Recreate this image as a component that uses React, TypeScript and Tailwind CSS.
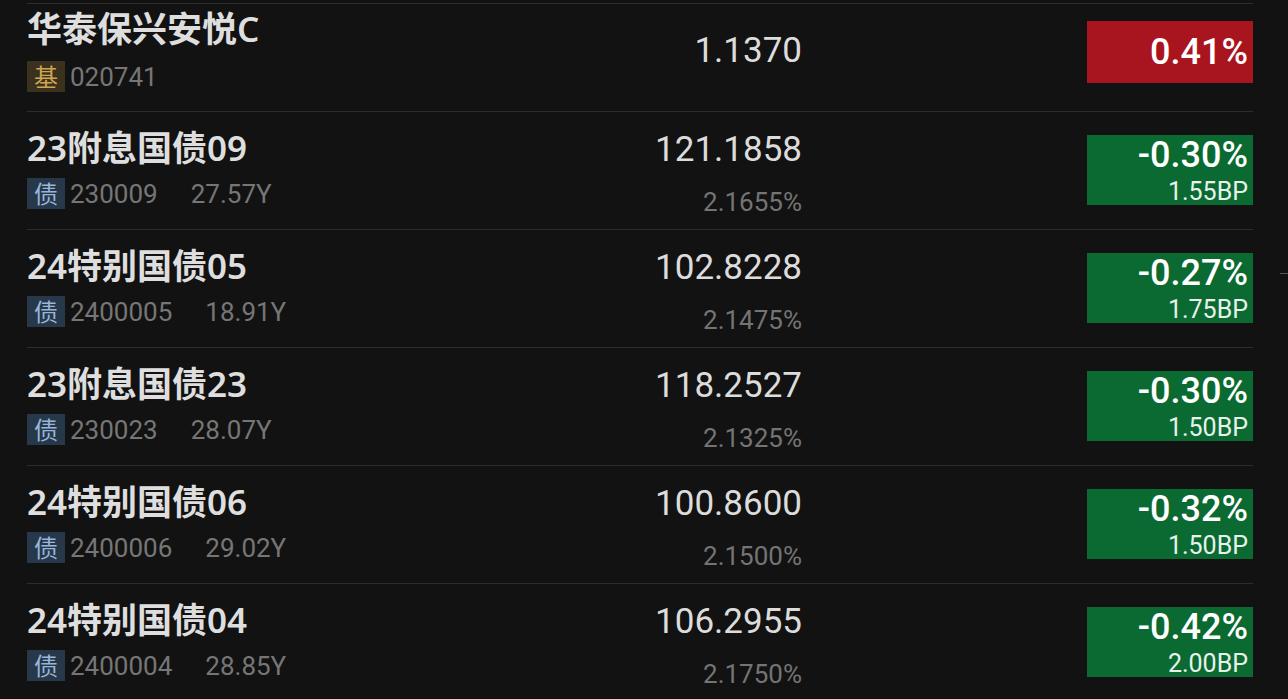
import React from "react";

type Row = {
  name: string;
  tag: "基" | "债";
  code: string;
  term?: string;
  price: string;
  yieldRate?: string;
  change: string;
  bp?: string;
};

const rows: Row[] = [
  { name: "华泰保兴安悦C", tag: "基", code: "020741", price: "1.1370", change: "0.41%" },
  { name: "23附息国债09", tag: "债", code: "230009", term: "27.57Y", price: "121.1858", yieldRate: "2.1655%", change: "-0.30%", bp: "1.55BP" },
  { name: "24特别国债05", tag: "债", code: "2400005", term: "18.91Y", price: "102.8228", yieldRate: "2.1475%", change: "-0.27%", bp: "1.75BP" },
  { name: "23附息国债23", tag: "债", code: "230023", term: "28.07Y", price: "118.2527", yieldRate: "2.1325%", change: "-0.30%", bp: "1.50BP" },
  { name: "24特别国债06", tag: "债", code: "2400006", term: "29.02Y", price: "100.8600", yieldRate: "2.1500%", change: "-0.32%", bp: "1.50BP" },
  { name: "24特别国债04", tag: "债", code: "2400004", term: "28.85Y", price: "106.2955", yieldRate: "2.1750%", change: "-0.42%", bp: "2.00BP" },
];

const cjk = "font-['Noto_Sans','Noto_Sans_CJK_SC',sans-serif]";
const num = "font-['Roboto','Noto_Sans_CJK_SC',sans-serif]";

function Tag({ tag }: { tag: Row["tag"] }) {
  const tone = tag === "基" ? "bg-[#3a311f] text-[#cfa650]" : "bg-[#28384b] text-[#97b6da]";
  return (
    <span className={`${cjk} ${tone} w-[38px] h-[31px] flex items-center justify-center text-[24px] leading-none`}>
      {tag}
    </span>
  );
}

function QuoteRow({ row }: { row: Row }) {
  const fund = !row.bp;
  return (
    <div className={`flex border-t border-[#2c2c2c] ${fund ? "h-[108px]" : "h-[118px]"}`}>
      <div className={`w-[470px] flex flex-col ${fund ? "pt-[5px]" : "pt-[16px]"}`}>
        <div className={`${cjk} text-[35px] leading-[40px] font-semibold text-[#dedede]`}>{row.name}</div>
        <div className={`flex items-center h-[31px] ${fund ? "mt-[12px]" : "mt-[10px]"}`}>
          <Tag tag={row.tag} />
          <span className={`${num} ml-[5px] text-[26px] text-[#767676] leading-none`}>{row.code}</span>
          {row.term && (
            <span className={`${num} ml-[33px] text-[26px] text-[#767676] leading-none`}>{row.term}</span>
          )}
        </div>
      </div>

      <div className={`w-[305px] flex flex-col items-end ${fund ? "pt-[29px]" : "pt-[20px]"}`}>
        <div className={`${num} text-[35px] leading-[36px] text-[#dcdcdc]`}>{row.price}</div>
        {row.yieldRate && (
          <div className={`${num} mt-[21px] text-[26px] leading-[26px] text-[#747474]`}>{row.yieldRate}</div>
        )}
      </div>

      <div className="flex-1" />

      <div className={`w-[166px] ${fund ? "pt-[17px]" : "pt-[23px]"}`}>
        {fund ? (
          <div className="h-[62px] bg-[#a8151f] flex items-center justify-end pr-[5px]">
            <span className={`${num} text-[36px] leading-none font-medium text-white`}>{row.change}</span>
          </div>
        ) : (
          <div className="h-[70px] bg-[#0b6a31] flex flex-col items-end pr-[5px] pt-[2px]">
            <span className={`${num} text-[36px] leading-[36px] font-medium text-white`}>{row.change}</span>
            <span className={`${num} mt-[6px] text-[25px] leading-[25px] text-[#e8f2ec]`}>{row.bp}</span>
          </div>
        )}
      </div>
    </div>
  );
}

export default function App() {
  return (
    <div className="relative w-full h-[699px] overflow-hidden bg-[#121212] pt-[3px]">
      <div className="ml-[27px] w-[1226px]">
        {rows.map((row) => (
          <QuoteRow key={row.code} row={row} />
        ))}
      </div>
      <div className="absolute right-0 top-[273px] w-[8px] h-[1px] bg-[#555555]" />
    </div>
  );
}
